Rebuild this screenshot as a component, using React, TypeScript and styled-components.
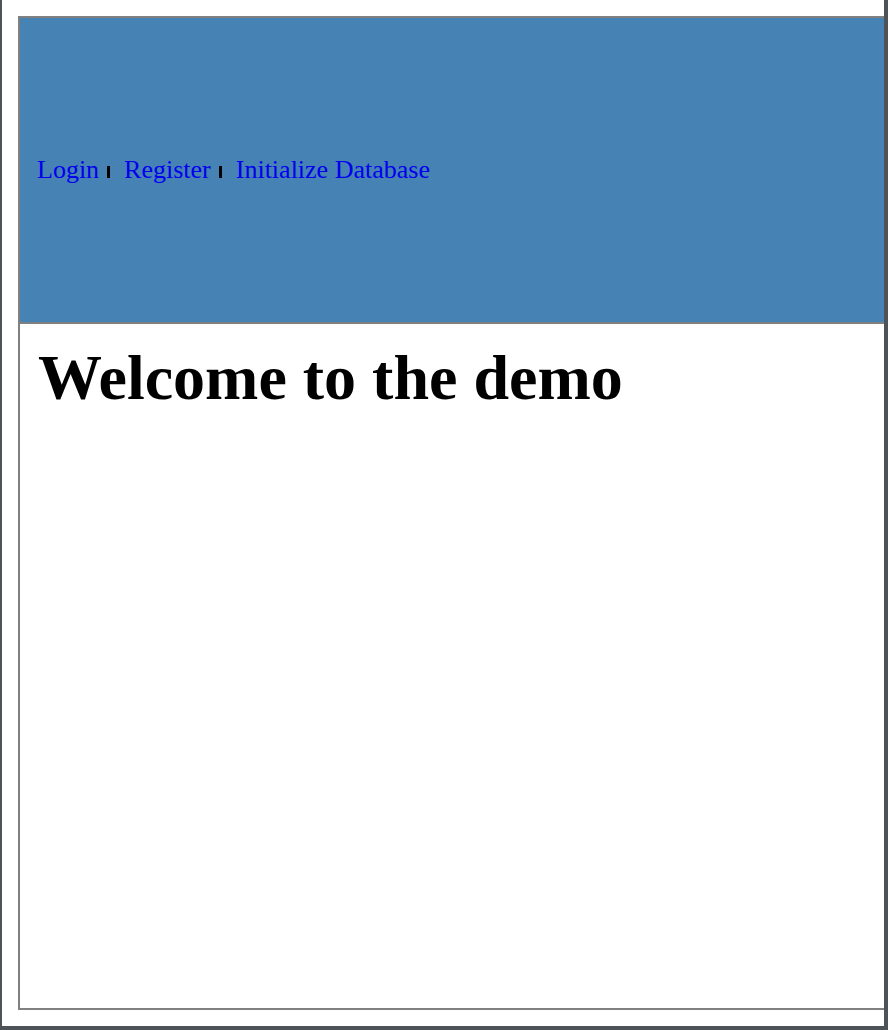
import React from "react";
import styled, { createGlobalStyle } from "styled-components";

const GlobalStyle = createGlobalStyle`
  html, body {
    margin: 0;
    padding: 0;
    background: #ffffff;
  }
  body {
    font-family: "Liberation Serif", "Times New Roman", serif;
  }
`;

const Frame = styled.div`
  box-sizing: border-box;
  width: 888px;
  height: 1030px;
  border-left: 2px solid #4e5357;
  border-right: 4px solid #4e5357;
  border-bottom: 4px solid #4e5357;
  background: #ffffff;
  padding: 16px 0 0 16px;
  overflow: hidden;
`;

const Page = styled.div`
  box-sizing: border-box;
  width: 900px;
  height: 994px;
  border: 2px solid #808080;
  display: flex;
  flex-direction: column;
  background: #ffffff;
`;

const Header = styled.header`
  flex: 0 0 auto;
  height: 304px;
  background: #4682b4;
  border-bottom: 2px solid #808080;
  display: flex;
  align-items: center;
  padding-left: 17px;
`;

const Nav = styled.nav`
  display: block;
  font-family: "Liberation Serif", "Times New Roman", serif;
  font-size: 26px;
  line-height: 30px;
  white-space: nowrap;
`;

const NavLink = styled.a`
  color: #0000ee;
  text-decoration: none;
  cursor: pointer;
`;

const Separator = styled.span`
  display: inline-block;
  width: 3px;
  height: 12px;
  background: #000000;
  vertical-align: baseline;
  margin: 0 14px 0 8px;
`;

const Main = styled.main`
  flex: 1 1 auto;
  padding: 0 18px;
`;

const Title = styled.h1`
  margin: 17px 0 0;
  font-family: "Liberation Serif", "Times New Roman", serif;
  font-weight: bold;
  font-size: 64px;
  line-height: 74px;
  color: #000000;
`;

export default function App() {
  const links = ["Login", "Register", "Initialize Database"];
  return (
    <>
      <GlobalStyle />
      <Frame>
        <Page>
          <Header>
            <Nav>
              {links.map((l, i) => (
                <React.Fragment key={l}>
                  <NavLink href="#">{l}</NavLink>
                  {i < links.length - 1 && <Separator />}
                </React.Fragment>
              ))}
            </Nav>
          </Header>
          <Main>
            <Title>Welcome to the demo</Title>
          </Main>
        </Page>
      </Frame>
    </>
  );
}
